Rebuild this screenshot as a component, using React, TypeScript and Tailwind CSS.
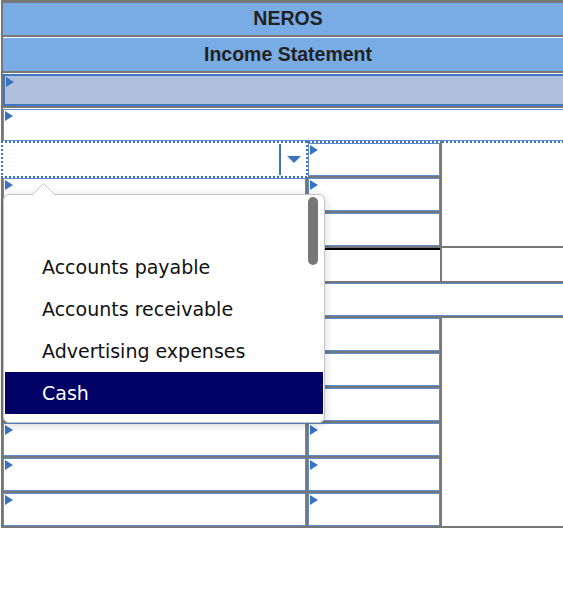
import React from 'react';

const Marker: React.FC = () => (
  <svg className="absolute left-[1px] top-[1px]" width="8" height="10" viewBox="0 0 8 10">
    <polygon points="0,0 8,5 0,10" fill="#3b73c0" />
  </svg>
);

const InputCell: React.FC<{ className?: string }> = ({ className = '' }) => (
  <div className={`relative bg-white border border-[#5b8dd0] ${className}`}>
    <Marker />
  </div>
);

const options = ['', 'Accounts payable', 'Accounts receivable', 'Advertising expenses', 'Cash'];

const App: React.FC = () => {
  const selected = 'Cash';

  return (
    <div className="relative w-[563px] h-[599px] overflow-hidden bg-white">
      <div className="ml-[1px] w-max grid grid-cols-[303px_132px_131px] grid-rows-[32px_34px_repeat(13,33px)] gap-[2px] bg-[#777] pt-[3px] pl-[2px] pr-[2px] pb-[2px]">
        {/* headers */}
        <div className="col-span-3 flex items-center justify-center bg-[#79ace5] font-['Liberation_Sans',Arial,sans-serif] text-[19.5px] font-bold text-[#222]">
          NEROS
        </div>
        <div className="col-span-3 flex items-center justify-center border-t border-white bg-[#79ace5] font-['Liberation_Sans',Arial,sans-serif] text-[19.5px] font-bold text-[#222]">
          Income Statement
        </div>
        <div className="col-span-3 border-t border-white bg-white">
          <div className="relative h-full border-2 border-[#3f78c2] bg-[#b0bfdb]">
            <Marker />
          </div>
        </div>
        <div className="col-span-3 border-t border-white bg-white">
          <InputCell className="h-full" />
        </div>

        {/* row 5: dropdown with dotted focus frame */}
        <div className="-m-[2px] flex p-[2px] bg-white bg-no-repeat bg-[repeating-linear-gradient(90deg,#3b73c0_0_2px,transparent_2px_4px),repeating-linear-gradient(90deg,#3b73c0_0_2px,transparent_2px_4px),repeating-linear-gradient(180deg,#3b73c0_0_2px,transparent_2px_4px),repeating-linear-gradient(180deg,#3b73c0_0_2px,transparent_2px_4px)] [background-position:top,bottom,left,right] [background-size:100%_2px,100%_2px,2px_100%,2px_100%]">
          <div className="flex-1" />
          <div className="my-[1px] w-[2px] bg-[#3b73c0]" />
          <div className="flex w-[25px] items-center justify-center">
            <svg width="14" height="7" viewBox="0 0 14 7">
              <polygon points="0,0 14,0 7,7" fill="#3b73c0" />
            </svg>
          </div>
        </div>
        <div className="-mt-[2px] pt-[2px] bg-white bg-no-repeat bg-top bg-[repeating-linear-gradient(90deg,#3b73c0_0_2px,transparent_2px_4px)] [background-size:100%_2px]">
          <InputCell className="h-full" />
        </div>
        <div className="row-span-3 -mt-[2px] -ml-[2px] border-l-2 border-[#777] bg-white bg-no-repeat bg-top bg-[repeating-linear-gradient(90deg,#3b73c0_0_2px,transparent_2px_4px)] [background-size:100%_2px]" />

        {/* rows 6-7 */}
        <InputCell />
        <InputCell />
        <InputCell />
        <InputCell />

        {/* row 8 */}
        <InputCell />
        <div className="border-t-2 border-black bg-white" />
        <div className="bg-white" />

        {/* row 9 */}
        <InputCell className="col-span-3" />

        {/* rows 10-15 */}
        <InputCell />
        <InputCell />
        <div className="row-span-6 bg-white" />
        {[11, 12, 13, 14, 15].map((r) => (
          <React.Fragment key={r}>
            <InputCell />
            <InputCell />
          </React.Fragment>
        ))}
      </div>

      {/* dropdown menu */}
      <div className="absolute left-[3px] top-[194px] w-[322px] h-[229px] rounded-[6px] border border-[#c4c4c4] bg-white shadow-[0_2px_10px_rgba(0,0,0,0.18)] font-['DejaVu_Sans',Verdana,sans-serif] text-[19px]">
        <svg className="absolute -top-[12px] left-[27px]" width="25" height="13" viewBox="0 0 25 13">
          <polygon points="0,13 12.5,0.5 25,13" fill="#fff" stroke="#c4c4c4" strokeWidth="1" />
          <rect x="0" y="12" width="25" height="2" fill="#fff" />
        </svg>
        <div className="px-[1px] pt-[9px]">
          {options.map((o, i) => (
            <div
              key={i}
              className={`flex h-[42px] items-center pl-[37px] ${o === selected ? 'bg-[#000066] text-white' : 'text-[#111]'}`}
            >
              {o}
            </div>
          ))}
        </div>
        <div className="absolute left-[304px] top-[2px] h-[68px] w-[10px] rounded-full bg-[#777]" />
      </div>
    </div>
  );
};

export default App;
